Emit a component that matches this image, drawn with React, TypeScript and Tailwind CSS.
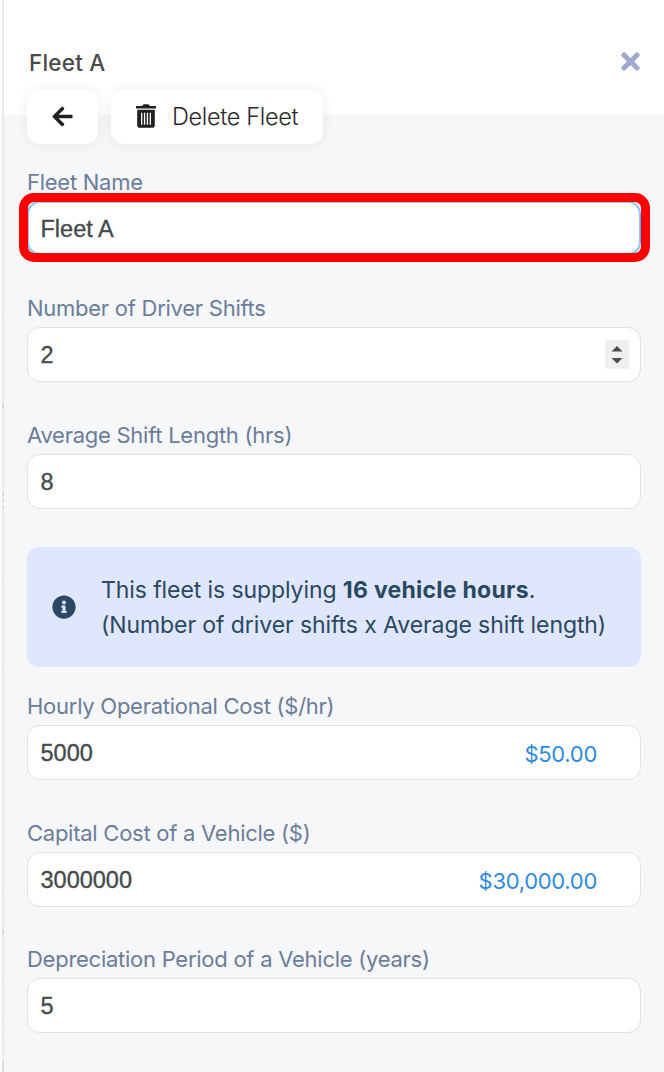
import React from "react";
import { FaArrowLeft, FaInfoCircle, FaTimes } from "react-icons/fa";

function TrashIcon() {
  return (
    <svg width="20" height="24" viewBox="0 0 20 24" fill="none" className="-mt-0.5 block shrink-0">
      <path d="M6.200 1.900C6.600.7 7.400.2 8.500.2h3c1.100 0 1.900.5 2.300 1.700H20v2.500H0V1.900Z" fill="#212121" />
      <path
        fillRule="evenodd"
        d="M1.200 5.700h17.600v15.500c0 1.700-1 2.600-2.600 2.600H3.800c-1.600 0-2.600-.9-2.600-2.600ZM5 8.800v11.900h1.300V8.800Zm2.900 0v11.900h1.300V8.800Zm2.900 0v11.900h1.300V8.800Zm2.900 0v11.900H15V8.800Z"
        fill="#212121"
      />
    </svg>
  );
}

function EdgeTicks() {
  return (
    <svg width="4" height="1072" viewBox="0 0 4 1072" className="block" fill="#dcdcdd">
      <path fill="#fcfcfc" d="M0 0h2v1072H0z" />
      <path fill="#ebebec" d="M2 0h2v1072H2z" />
      <path d="M2 316h2v1H2zM2 403h2v5H2zM2 580h2v1H2zM2 668h2v1H2zM2 889h2v1H2zM2 930h2v5H2zM2 976h2v1H2zM2 1019h2v1H2zM2 1037h2v1H2zM2 1061h2v11H2z" />
      <path fill="#bdbdbf" d="M2 494h2v1H2zM2 500h2v1H2zM2 507h2v1H2z" />
    </svg>
  );
}

function Stepper() {
  return (
    <div className="flex h-[29px] w-6 items-center justify-center rounded-[2px] bg-[#f0f0f0]">
      <svg width="12" height="18" viewBox="0 0 12 18" fill="#4d4d4d">
        <path d="M6 0l5.500 5.500H.5z" />
        <path d="M.5 12h11L6 17.500z" />
      </svg>
    </div>
  );
}

type FieldProps = {
  label: string;
  value: string;
  className: string;
  valueClass?: string;
  boxClass?: string;
  children?: React.ReactNode;
};

function Field({ label, value, className, valueClass = "", boxClass = "border-[#e1e2e4]", children }: FieldProps) {
  return (
    <div className={`flex flex-col ${className}`}>
      <div className="h-[34px] text-[22px] leading-[30px] tracking-[-0.26px] whitespace-nowrap text-[#6b7d99]">
        <span>{label}</span>
      </div>
      <div className={`relative flex flex-1 items-center justify-between rounded-[13px] border-[1.5px] bg-white pr-[11px] pl-[12.5px] ${boxClass}`}>
        <span className={`font-['Liberation_Sans',sans-serif] text-[23.5px] leading-7 text-[#454a4d] [-webkit-text-stroke:0.35px_#454a4d] ${valueClass}`}>{value}</span>
        {children}
      </div>
    </div>
  );
}

export default function App() {
  return (
    <div className="flex h-[1072px] w-[664px] overflow-hidden bg-white font-['Inter',sans-serif]">
      <div className="w-1 shrink-0">
        <EdgeTicks />
      </div>
      <main className="flex flex-1 flex-col bg-[#f5f7f9] pr-[23px]">
        <header className="-mr-[23px] flex h-[115px] shrink-0 flex-col bg-white pt-[46px] pr-[20.5px] pl-[23px]">
          <div className="flex h-8 shrink-0 items-center justify-between">
            <h1 className="pt-px pl-0.5 text-[22.5px] font-medium tracking-[0.2px] text-[#4a4a4a]">Fleet A</h1>
            <FaTimes size={27} color="#9fa8cf" className="-mt-px" />
          </div>
          <div className="mt-3 flex h-[54px] shrink-0 gap-[13px]">
            <div className="flex w-[71px] items-center justify-center rounded-[13px] bg-white pb-0.5 shadow-[0_0_14px_rgba(0,0,0,0.07)]">
              <FaArrowLeft size={23} color="#212121" />
            </div>
            <div className="flex w-[212px] items-center gap-4 rounded-[13px] bg-white pl-[25px] shadow-[0_0_14px_rgba(0,0,0,0.07)]">
              <TrashIcon />
              <span className="text-[23.5px] font-light tracking-[-0.33px] whitespace-nowrap text-[#292929]">Delete Fleet</span>
            </div>
          </div>
        </header>
        <section className="flex flex-col pt-[52px] pl-[23px]">
          <Field label="Fleet Name" value="Fleet A" className="h-[88px]" valueClass="pt-px" boxClass="border-[#56b0f5] shadow-[inset_0_0_0_1px_#8ccbfa]">
            <div className="pointer-events-none absolute -top-[9px] -right-[10px] -left-[9px] h-[69px] rounded-[15px] border-[9px] border-[#ff0000]" />
          </Field>
          <Field label="Number of Driver Shifts" value="2" className="mt-[38px] h-[89px]">
            <Stepper />
          </Field>
          <Field label="Average Shift Length (hrs)" value="8" className="mt-[38px] h-[89px]" />
          <div className="mt-[38px] flex h-[120px] items-center rounded-[12px] bg-[#dfe7fd] pl-[25px] text-[#2a4862]">
            <FaInfoCircle size={24} className="shrink-0" />
            <div className="pt-[2px] pl-[25px] text-[23px] leading-[35px] tracking-[-0.09px] whitespace-nowrap">
              <p><span>This fleet is supplying </span><strong className="font-bold tracking-[0.26px]">16 vehicle hours</strong>.</p>
              <p>(Number of driver shifts x Average shift length)</p>
            </div>
          </div>
          <Field label="Hourly Operational Cost ($/hr)" value="5000" className="mt-[24px] h-[89px]">
            <span className="mr-8 pt-[3px] text-[22px] tracking-[-0.3px] text-[#2f8adb]">$50.00</span>
          </Field>
          <Field label="Capital Cost of a Vehicle ($)" value="3000000" className="mt-[38px] h-[89px]">
            <span className="mr-8 pt-[3px] text-[22px] tracking-[-0.3px] text-[#2f8adb]">$30,000.00</span>
          </Field>
          <Field label="Depreciation Period of a Vehicle (years)" value="5" className="mt-[37px] h-[89px]" />
        </section>
      </main>
    </div>
  );
}
